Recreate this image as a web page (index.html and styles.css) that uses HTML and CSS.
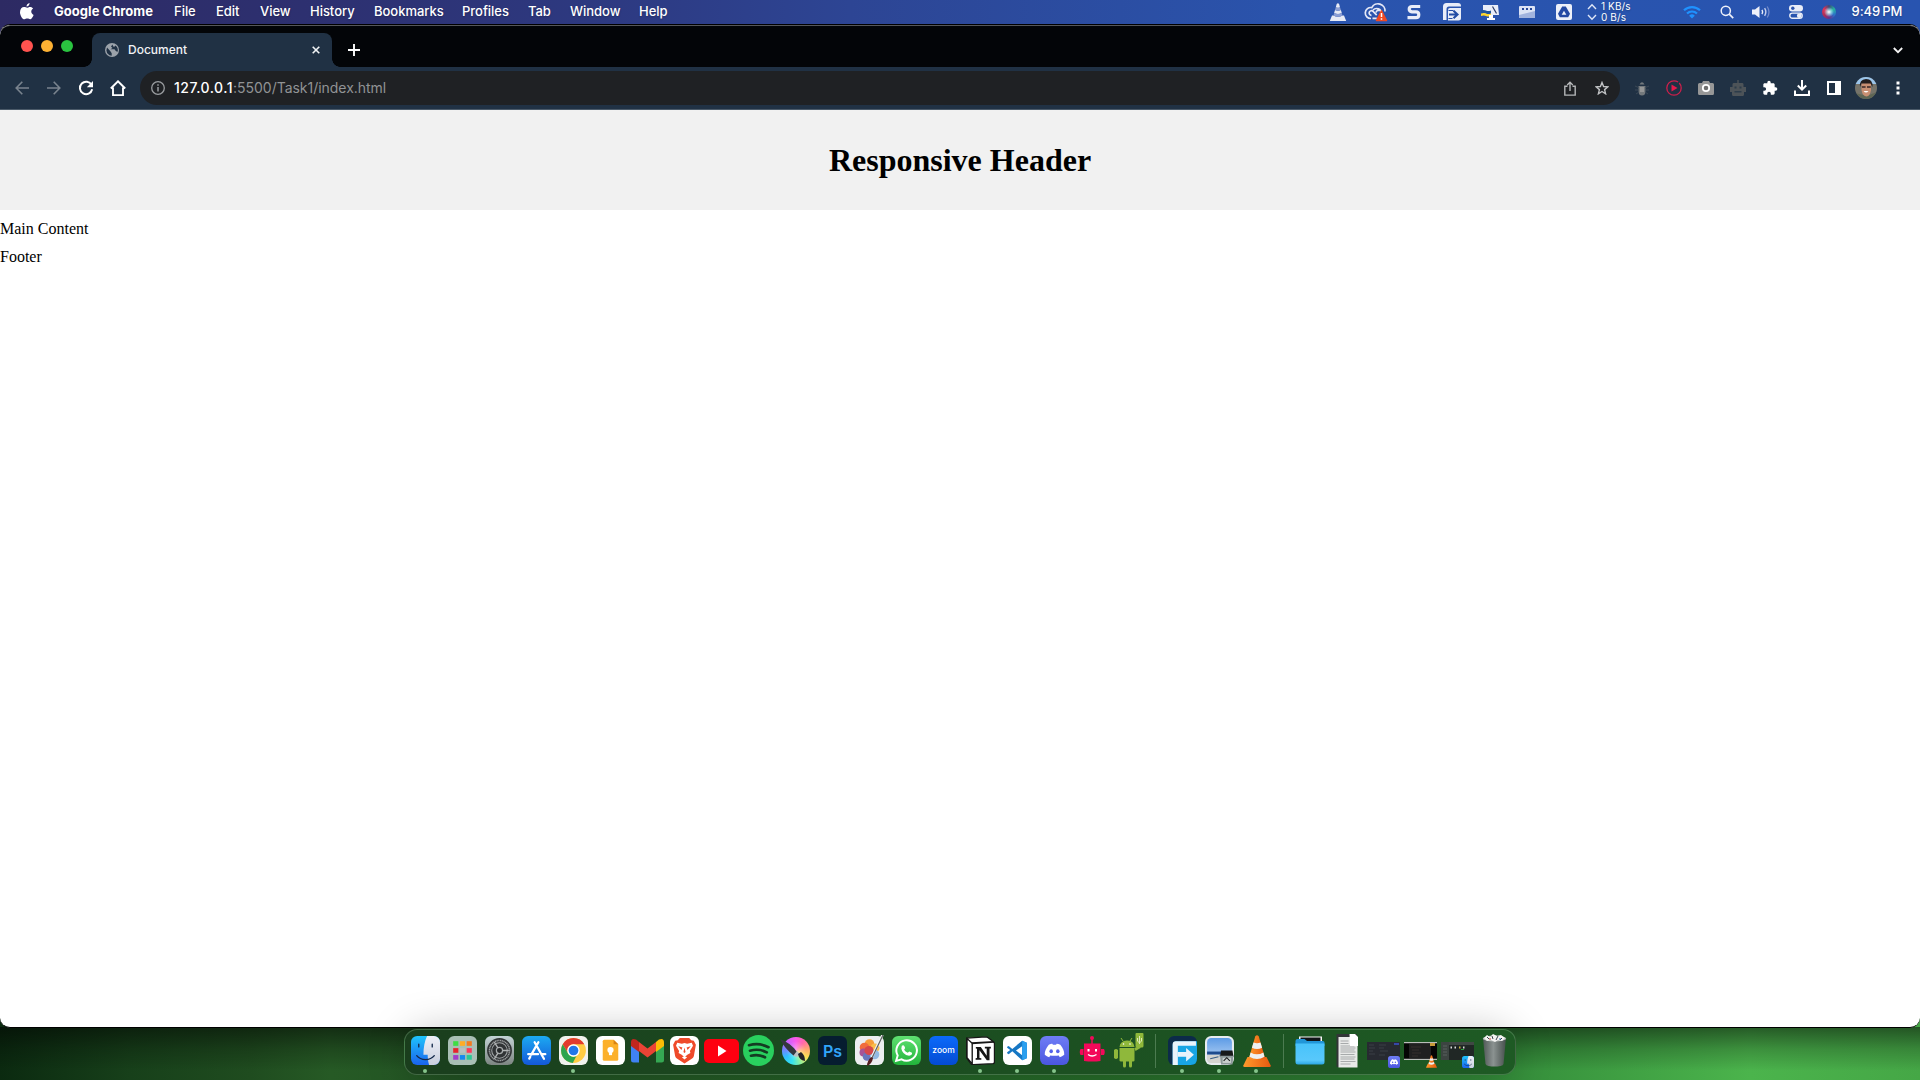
FILE: index.html
```html
<!DOCTYPE html>
<html lang="en">
<head>
<meta charset="utf-8">
<title>Document</title>
<link rel="stylesheet" href="styles.css">
</head>
<body>
<svg class="defs" aria-hidden="true">
  <defs>
    <linearGradient id="gBlue" x1="0" y1="0" x2="0" y2="1"><stop offset="0" stop-color="#1fc4fb"/><stop offset="1" stop-color="#1a63ee"/></linearGradient>
    <linearGradient id="gStore" x1="0" y1="0" x2="0" y2="1"><stop offset="0" stop-color="#1caaf2"/><stop offset="1" stop-color="#1458d8"/></linearGradient>
    <linearGradient id="gGrey" x1="0" y1="0" x2="0" y2="1"><stop offset="0" stop-color="#c3d3d5"/><stop offset="1" stop-color="#7c8581"/></linearGradient>
    <linearGradient id="gPale" x1="0" y1="0" x2="0" y2="1"><stop offset="0" stop-color="#eef0f8"/><stop offset="1" stop-color="#c8cedd"/></linearGradient>
    <linearGradient id="gGreen" x1="0" y1="0" x2="0" y2="1"><stop offset="0" stop-color="#5fe071"/><stop offset="1" stop-color="#22b43b"/></linearGradient>
    <linearGradient id="gDiscord" x1="0" y1="0" x2="0" y2="1"><stop offset="0" stop-color="#6f7df6"/><stop offset="1" stop-color="#4a56df"/></linearGradient>
    <linearGradient id="gTrash" x1="0" y1="0" x2="1" y2="0"><stop offset="0" stop-color="#55595c"/><stop offset=".45" stop-color="#94979a"/><stop offset="1" stop-color="#4a4e50"/></linearGradient>
    <linearGradient id="gCone" x1="0" y1="0" x2="1" y2="0"><stop offset="0" stop-color="#ff9a2c"/><stop offset="1" stop-color="#e85a10"/></linearGradient>
    <linearGradient id="gFolder" x1="0" y1="0" x2="0" y2="1"><stop offset="0" stop-color="#48c3fa"/><stop offset=".8" stop-color="#58c8fb"/><stop offset="1" stop-color="#2ba6e4"/></linearGradient>
    <linearGradient id="gSky" x1="0" y1="0" x2="0" y2="1"><stop offset="0" stop-color="#5d9be6"/><stop offset="1" stop-color="#c2dbf5"/></linearGradient>
  </defs>
  <symbol id="finder" viewBox="0 0 28 28">
    <rect width="28" height="28" rx="6" fill="url(#gBlue)"/>
    <path d="M15.500 0H22a6 6 0 0 1 6 6v16a6 6 0 0 1-6 6h-4.500c-.9-3-1.300-6-1.400-10H12c0-7 1.200-13 3.500-18z" fill="url(#gPale)"/>
    <path d="M7.500 8v2.500M20.500 8v2.500M5.500 19c4 5 13 5 17 0" fill="none" stroke="#13284a" stroke-width="1.300" stroke-linecap="round"/>
  </symbol>
  <symbol id="discord" viewBox="0 0 28 28">
    <rect width="28" height="28" rx="6" fill="url(#gDiscord)"/>
    <path d="M8.500 8.500c1.500-.8 2.600-1 3.400-1.100l.6 1.100h3l.6-1.100c1 .1 2.300.4 3.500 1.100 2.700 3.300 4 6.300 3.800 9.700-1.400 1.200-2.800 1.900-4.300 2.300l-1-1.700c-2.600.5-5.600.5-8.200 0l-1 1.700c-1.600-.4-3-1.100-4.300-2.300C4.300 14.800 6 11.600 8.500 8.500z" fill="#fff"/>
    <ellipse cx="10.800" cy="14.800" rx="1.700" ry="1.900" fill="#5563ea"/><ellipse cx="17.200" cy="14.800" rx="1.700" ry="1.900" fill="#5563ea"/>
  </symbol>
  <symbol id="cone" viewBox="0 0 28 32">
    <path d="M4.500 22h19l4.200 8.500q.3 1.500-1.200 1.500h-25Q0 32 .3 30.500z" fill="url(#gCone)"/>
    <path d="M12.200 1.500Q14-.8 15.800 1.500L22 23q-8 5.500-16 0z" fill="url(#gCone)"/>
    <path d="M10.500 7.500q3.500 1.600 7 0l1.600 5.300q-5.100 2.600-10.200 0zM7.600 17.500q6.400 3.700 12.800 0l1.100 4.300q-7.500 4.600-15 0z" fill="#eef0f1"/>
  </symbol>
</svg>

<div class="desktop">
  <div class="menubar">
    <svg class="apple" viewBox="0 0 14 17"><path d="M9.600 0c.1 1.700-1.400 3.600-3.100 3.600C6.300 2 7.900.2 9.600 0zM7.100 4.800C7.800 4.800 8.800 4 10.100 4c1.300 0 2.400.7 3 1.600-2.700 1.600-2.300 5.200.5 6.400-.7 1.900-2.100 4.300-3.500 4.300-1 0-1.500-.7-2.800-.7s-1.900.7-2.800.7C2.300 16.300 0 12.200 0 9.200 0 5.900 2 4.100 4 4.100c1.300 0 2.400.7 3.100.7z" fill="#fff"/></svg>
    <b>Google Chrome</b><span>File</span><span>Edit</span><span>View</span><span>History</span><span>Bookmarks</span><span>Profiles</span><span>Tab</span><span>Window</span><span>Help</span>
    <div class="status">
      <svg width="18" height="20" viewBox="0 0 18 20"><path d="M7.700 2q1.200-1.600 2.400 0l.9 3.200q-2 1-4.200 0zM6 8q3 1.500 5.900 0l.9 3q-3.800 2-7.700 0zM3 13.500h1.500q4.400 2.500 9 0H15l2.200 5.500H.8z" fill="#e8ebf5"/><path d="M6.800 5.200q2 1 4.200 0l.9 2.800q-3 1.500-5.900 0zM5.100 11q3.900 2 7.700 0l.7 2.500q-4.500 2.500-9 0z" fill="#8b9ed4"/></svg>
      <svg width="24" height="20" viewBox="0 0 24 20"><g fill="none" stroke="#e5e9f7" stroke-width="1.700"><path d="M7 16.500a5.500 5.500 0 1 1 .8-10.900A7 7 0 0 1 21 9.500M7.500 13.300a2.300 2.300 0 1 1 1.600-3.900l3.600 3.800M9 8a5 5 0 0 1 8.500 3.300M8.500 16.300h4.300M12 10.500a3 3 0 0 1 4-2"/></g><path d="M17.500 8.800 22.500 18.500h-10z" fill="#f04a24" stroke="#f04a24" stroke-width="1.500" stroke-linejoin="round"/><path d="M17.500 11v4M17.500 16.200v1.500" stroke="#fff" stroke-width="1.500"/></svg>
      <svg width="14" height="18" viewBox="0 0 14 18"><path d="M13.200 3.500H5Q2.200 3.500 2.200 6T5 8.800h4Q11.800 8.800 11.800 11.700T9 14.600H.5" fill="none" stroke="#e9edf8" stroke-width="3.200"/></svg>
      <svg width="20" height="20" viewBox="0 0 20 20"><path d="M1 18V4.500Q1 1 4.500 1H16q3 0 3 3v.5H7Q4.500 4.500 4.500 7v11z" fill="#e9edf8"/><path d="M6 18.500V8q0-2 2-2h11v10q0 2.500-2.500 2.500z" fill="#e9edf8"/><path d="M7 12.500h7.500M11.500 8.700l4 3.800-4 3.800" fill="none" stroke="#234ca4" stroke-width="2.100"/><path d="M6.500 8.500h5M6.500 16.500h4" stroke="#234ca4" stroke-width="1.200"/></svg>
      <svg width="20" height="18" viewBox="0 0 20 18"><path d="M3 2h15l1 10H3z" fill="#e9edf8"/><path d="M12.500 3.500l4 7" stroke="#2a3b68" stroke-width="1.200"/><path d="M1 7.500q3-1 5 0t5 0v3.200q-3 1-5 0t-5 0z" fill="#22569b"/><path d="M1 10.500q3-1 5 0t5 0V13q-3 1-5 0t-5 0z" fill="#ffd52b"/><path d="M9 12h4v3h2v2H7v-2h2z" fill="#fff"/></svg>
      <svg width="18" height="18" viewBox="0 0 18 18"><rect x="1" y="3" width="16" height="12" rx="1" fill="#dce3f5"/><path d="M1 12 17 8v6q0 1-1 1H2q-1 0-1-1z" fill="#a1b3de"/><path d="M4 5h2v2H4zM8 5h2v2H8zM12 5h2v2h-2z" fill="#27489a"/></svg>
      <svg width="18" height="18" viewBox="0 0 18 18"><rect x="1" y="1" width="16" height="16" rx="2" fill="#edf0f9"/><path d="M7.200 3.500h3.600l4.200 7.300-1.800 3.400H4.800L3 10.800z" fill="#2449a3"/><path d="M9 7.800l2.300 4H6.700z" fill="#edf0f9"/></svg>
      <div class="net"><svg viewBox="0 0 10 18" width="10" height="18"><path d="M1 6l4-4.200L9 6M1 12l4 4.200L9 12" fill="none" stroke="#dfe6f7" stroke-width="1.400"/></svg><div>1 KB/s<br>0 B/s</div></div>
      <svg width="18" height="14" viewBox="0 0 18 14"><g fill="none" stroke="#1f92ff" stroke-width="2.200"><path d="M1 5.300a11.500 11.500 0 0 1 16 0M4 8.500a7.200 7.200 0 0 1 10 0"/></g><path d="M6.200 10.700a4 4 0 0 1 5.600 0L9 13.500z" fill="#1f92ff"/></svg>
      <svg width="14" height="14" viewBox="0 0 14 14"><circle cx="5.800" cy="5.800" r="4.600" fill="none" stroke="#eef1fa" stroke-width="1.500"/><path d="m9.200 9.200 4 4" stroke="#eef1fa" stroke-width="1.700"/></svg>
      <svg width="20" height="14" viewBox="0 0 20 14"><path d="M1 4.500h3L8.500 1v12L4 9.500H1z" fill="#eef1fa"/><path d="M11 4.800q1.300 2.200 0 4.400" fill="none" stroke="#eef1fa" stroke-width="1.400"/><path d="M13.600 3.200q2.500 3.800 0 7.600" fill="none" stroke="#c4cfed" stroke-width="1.400"/><path d="M16.200 1.500q3.600 5.500 0 11" fill="none" stroke="#7088cb" stroke-width="1.300"/></svg>
      <svg width="14" height="14" viewBox="0 0 14 14"><rect y="0" width="14" height="6.400" rx="3.200" fill="#e9edf8"/><circle cx="3.800" cy="3.200" r="1.700" fill="#2c54ad"/><rect x=".8" y="8.100" width="12.400" height="5.200" rx="2.600" fill="none" stroke="#e9edf8" stroke-width="1.400"/><circle cx="10.200" cy="10.700" r="2.300" fill="#e9edf8"/></svg>
      <i class="siri"></i>
      <time>9:49<span>PM</span></time>
    </div>
  </div>

  <div class="window">
    <div class="tabstrip">
      <div class="lights"><i class="red"></i><i class="amber"></i><i class="green"></i></div>
      <div class="tab">
        <svg width="14" height="14" viewBox="0 0 14 14"><circle cx="7" cy="7" r="7" fill="#9ba2aa"/><path d="M2 4.500 5.200 8l1.500 2.300v2.500Q2 12 1.400 7.500zM7.500 1.500 6 3.500 7.500 5l-2 1.300h4l1.500 2 1.700.5q.8-4-2.200-6.300L9 4 8 3z" fill="#203144"/></svg>
        <span>Document</span>
        <svg width="8" height="8" viewBox="0 0 8 8"><path d="M.7.700l6.600 6.600M7.300.7.700 7.300" stroke="#f1f3f5" stroke-width="1.600"/></svg>
      </div>
      <svg class="plus" width="12" height="12" viewBox="0 0 12 12"><path d="M6 0v12M0 6h12" stroke="#fff" stroke-width="1.900"/></svg>
      <svg class="chevron" width="10" height="7" viewBox="0 0 10 7"><path d="m.8 1 4.200 4.200L9.200 1" fill="none" stroke="#f4f4f4" stroke-width="1.800"/></svg>
    </div>

    <div class="toolbar">
      <div class="slot"><svg width="14" height="14" viewBox="0 0 14 14"><path d="M14 7H1.500M7.300.8 1.200 7l6.100 6.200" fill="none" stroke="#79838e" stroke-width="1.600"/></svg></div>
      <div class="slot"><svg width="14" height="14" viewBox="0 0 14 14"><path d="M0 7h12.500M6.700.8 12.800 7l-6.100 6.200" fill="none" stroke="#79838e" stroke-width="1.600"/></svg></div>
      <div class="slot"><svg width="16" height="16" viewBox="0 0 16 16"><path d="M13.600 5A6.200 6.200 0 1 0 14.200 9.300" fill="none" stroke="#fff" stroke-width="2"/><path d="M15 1v6.200H8.800z" fill="#fff"/></svg></div>
      <div class="slot"><svg width="16" height="16" viewBox="0 0 16 16"><path d="M.8 8.500 8 1.300l7.200 7.200M3 7.500v7.600h10V7.500" fill="none" stroke="#fff" stroke-width="1.900"/></svg></div>
      <div class="omnibox">
        <svg width="14" height="14" viewBox="0 0 14 14"><circle cx="7" cy="7" r="6.300" fill="none" stroke="#9a9da0" stroke-width="1.300"/><path d="M7 6v4.500M7 3.300v1.500" stroke="#9a9da0" stroke-width="1.500"/></svg>
        <div class="url"><b>127.0.0.1</b>:5500/Task1/index.html</div>
        <svg class="share" width="12" height="15" viewBox="0 0 12 15"><path d="M3.500 5.200H.8v8.900h10.400V5.200H8.500M6 10V1.500M3.200 4 6 1.200 8.800 4" fill="none" stroke="#b4b6b8" stroke-width="1.400"/></svg>
        <svg width="14" height="14" viewBox="0 0 14 14"><path d="m7 1.500 1.600 4 4.300.3-3.300 2.800 1 4.200L7 10.500l-3.600 2.300 1-4.200L1.100 5.800l4.300-.3z" fill="none" stroke="#c0c2c4" stroke-width="1.400"/></svg>
      </div>
      <div class="slot"><svg width="14" height="15" viewBox="0 0 14 15"><path d="M4.500 3.500Q7-1 9.500 3.500z" fill="#73797d"/><path d="M3.500 5h7v5q0 4.500-3.500 4.500T3.500 10z" fill="#74797c"/><path d="M5 6h4v5H5z" fill="#969797"/><path d="M0 5l3.500 1.500M14 5l-3.500 1.500M0 9h3.500M10.500 9H14M1 13l3-2M13 13l-3-2" stroke="#3b4856"/></svg></div>
      <div class="slot"><svg width="16" height="16" viewBox="0 0 16 16"><circle cx="8" cy="8" r="7.200" fill="none" stroke="#cd1f4b" stroke-width="1.300" stroke-dasharray="38 1.500"/><path d="M5.500 4.500v7l6-3.500z" fill="#e51a4b"/></svg></div>
      <div class="slot"><svg width="16" height="14" viewBox="0 0 16 14"><path d="M1.500 2H4l1-2h6l1 2h2.500Q16 2 16 3.500v9q0 1.500-1.500 1.500h-13Q0 14 0 12.500v-9Q0 2 1.500 2z" fill="#979797"/><circle cx="8" cy="7" r="3.200" fill="#6f6f6f" stroke="#fff" stroke-width="1.800"/></svg></div>
      <div class="slot"><svg width="16" height="16" viewBox="0 0 16 16"><path d="M7.300 0h1.400v3h3.800q1 0 1 1.500V7H16v5h-2v2.500q0 1.500-1.500 1.500h-9Q2 16 2 14.500V12H0V7h2.500V4.500q0-1.500 1-1.500h3.800z" fill="#4d5358"/><path d="M4.500 6.500h2v2h-2zM9.500 6.500h2v2h-2zM4.500 11h7v1.500h-7z" fill="#2d3c4a"/></svg></div>
      <div class="slot"><svg width="16" height="16" viewBox="0 0 24 24"><path d="M20.500 11H19V7c0-1.100-.9-2-2-2h-4V3.500a2.500 2.500 0 0 0-5 0V5H4c-1.100 0-2 .9-2 2v3.800h1.500a2.700 2.700 0 0 1 0 5.400H2V20c0 1.100.9 2 2 2h3.800v-1.500a2.700 2.700 0 0 1 5.400 0V22H17c1.100 0 2-.9 2-2v-4h1.500a2.500 2.500 0 0 0 0-5z" fill="#fff"/></svg></div>
      <div class="slot"><svg width="16" height="16" viewBox="0 0 16 16"><path d="M8 0v9M3.800 5.500 8 9.700l4.200-4.200M1 10.500V15h14v-4.500" fill="none" stroke="#fff" stroke-width="2"/></svg></div>
      <div class="slot"><svg width="14" height="14" viewBox="0 0 14 14"><path d="M0 0h14v14H0zM2 2v10h6V2z" fill="#fff" fill-rule="evenodd"/></svg></div>
      <div class="slot"><svg width="22" height="22" viewBox="0 0 22 22"><clipPath id="av"><circle cx="11" cy="11" r="11"/></clipPath><g clip-path="url(#av)"><path d="M0 0h22v22H0z" fill="#75736a"/><path d="M0 0h22v7H0z" fill="#9ac4ea"/><path d="M0 16l8 2 6 0 8-3v7H0z" fill="#5f6654"/><path d="M6.500 6h9.500v7q-1 6-4.500 6.500-4-.5-5-6.500z" fill="#c98f72"/><path d="M5 10Q4 2.500 11 2q7 0 6.500 8l-2-3.500h-9z" fill="#251f1f"/><path d="M6.800 9.300h3.800v1.400H7zM12 9.300h3.800v1.400H12z" fill="#3a2927"/><path d="M8.500 14h5q-2.500 3-5 0z" fill="#fff"/></g></svg></div>
      <div class="slot"><svg width="4" height="14" viewBox="0 0 4 14"><path d="M.5.500h3v3h-3zM.5 5.500h3v3h-3zM.5 10.500h3v3h-3z" fill="#fff"/></svg></div>
    </div>

    <div class="page">
      <header><h1>Responsive Header</h1></header>
      <main>Main Content</main>
      <footer>Footer</footer>
    </div>
  </div>

  <div class="dockarea">
    <div class="dock">
      <div class="app on"><svg width="29" height="29"><use href="#finder"/></svg></div>
      <div class="app"><svg width="29" height="29" viewBox="0 0 28 28"><rect width="28" height="28" rx="6" fill="#a9bfb5"/><path d="M5 5h5v4.500H5z" fill="#3fdc45"/><path d="M11.500 5h5v4.500h-5z" fill="#ffac26"/><path d="M18 5h5v4.500h-5z" fill="#f47b1f"/><path d="M5 11.700h5v4.500H5z" fill="#e8232d"/><path d="M11.500 11.700h5v4.500h-5z" fill="#b8bfc1"/><path d="M18 11.700h5v4.500h-5z" fill="#ff3859"/><path d="M5 18.400h5v4.500H5z" fill="#a13dc9"/><path d="M11.500 18.400h5v4.500h-5z" fill="#1689ef"/><path d="M18 18.400h5v4.500h-5z" fill="#2bc994"/></svg></div>
      <div class="app"><svg width="29" height="29" viewBox="0 0 28 28"><rect width="28" height="28" rx="6" fill="url(#gGrey)"/><circle cx="14" cy="14" r="12" fill="#303335"/><circle cx="14" cy="14" r="9.700" fill="none" stroke="#999d9e" stroke-width="1.500" stroke-dasharray="1.200 .5"/><circle cx="14" cy="14" r="7.500" fill="none" stroke="#a2a6a7" stroke-width="1"/><circle cx="14" cy="14" r="3" fill="#25282a" stroke="#a6aaab" stroke-width="1.200"/><path d="M17 14h6M12.500 11.500 9 6M12.500 16.500 9 22" stroke="#b0b3b4" stroke-width="1.300"/></svg></div>
      <div class="app"><svg width="29" height="29" viewBox="0 0 28 28"><rect width="28" height="28" rx="6" fill="url(#gStore)"/><path d="M12.200 6l7.600 13.500M15.800 6 9 18M6 17.500h9.500M19 17.500h3.500M8 20l-1 1.800M20.200 20.300l1 1.700" stroke="#fff" stroke-width="2.200" stroke-linecap="round"/></svg></div>
      <div class="app on"><svg width="29" height="29" viewBox="0 0 28 28"><rect width="28" height="28" rx="6" fill="#f1f2ee"/><circle cx="14" cy="14" r="12" fill="#fc4"/><path d="M3.600 8A12 12 0 0 1 24.400 8H14a6 6 0 0 0-5.500 8.400z" fill="#e23b2e"/><path d="M3.600 8 8.800 17a6 6 0 0 0 8 2.400l-3.500 6.600A12 12 0 0 1 3.600 8z" fill="#2da44e"/><circle cx="14" cy="14" r="6" fill="#fff"/><circle cx="14" cy="14" r="4.700" fill="#2277e8"/></svg></div>
      <div class="app"><svg width="29" height="29" viewBox="0 0 28 28"><rect width="28" height="28" rx="6" fill="#fff"/><path d="M8 3.500h9L21.500 8v14.500q0 1.500-1.500 1.500H8q-1.500 0-1.500-1.500V5Q6.500 3.500 8 3.500z" fill="#fcb02b"/><path d="M17 3.500 21.500 8H17z" fill="#d98214"/><circle cx="14" cy="13.500" r="3" fill="#fff"/><path d="M12.500 16h3v2.500h-3z" fill="#fff"/></svg></div>
      <div class="app"><svg width="33" height="25" viewBox="0 0 33 25"><path d="M0 3.500V22q0 2.500 2.500 2.500H8V8z" fill="#3f82f3"/><path d="M33 3.500V22q0 2.500-2.500 2.500H25V8z" fill="#35a853"/><path d="M25 4 28 1.500q5-2 5 3V8l-8 6z" fill="#fbbc05"/><path d="M0 4.500q0-5 5-3L8 4v10L0 8z" fill="#c0261e"/><path d="M8 4l8.500 6.500L25 4v9l-8.500 6.500L8 13z" fill="#ea4335"/></svg></div>
      <div class="app"><svg width="29" height="29" viewBox="0 0 28 28"><rect width="28" height="28" rx="6" fill="#fff"/><path d="M9.500 2h9l2 2 2.500.5 2 4-2 11q-.5 1.500-2 2.500L14 26.500 7 22q-1.500-1-2-2.500L3 8.500l2-4L7.500 4z" fill="#ef4a2a"/><path d="M7 6.500l4.500 1L14 6.700l2.500.8 4.500-1 1.200 3-3 5 .5 2-3 1.500-2.700 2.500-2.700-2.500-3-1.500.5-2-3-5z" fill="#fff"/><path d="M8 10l4 1-1 2.500zM20 10l-4 1 1 2.500zM14 11l1 4.500-1 1-1-1z" fill="#ef4a2a"/><path d="M11.500 20.500 14 19.500l2.500 1L14 22.700z" fill="#fff"/></svg></div>
      <div class="app"><svg width="35" height="24" viewBox="0 0 35 24"><rect width="35" height="24" rx="5" fill="#fe0010"/><path d="M14 6.500v11l8.500-5.500z" fill="#fff"/></svg></div>
      <div class="app"><svg width="31" height="31" viewBox="0 0 31 31"><circle cx="15.500" cy="15.500" r="15.500" fill="#29d05e"/><path d="M6 10.200q10.500-2.800 19.500 2M7 15.700q9-2.500 16.800 1.700M8 20.700q7.500-1.900 14 1.600" fill="none" stroke="#143c22" stroke-linecap="round" stroke-width="2.700"/></svg></div>
      <div class="app"><div class="krita"><svg width="29" height="29" viewBox="0 0 29 29"><path d="M0 2q11 4 17 13l-3 4Q5 12 0 2z" fill="#343740"/><path d="m17 14 3 3-3 3-4-1z" fill="#bbc0c1"/><path d="m18 17 3-2q4 3 4 9-6-1-7-7z" fill="#252228"/></svg></div></div>
      <div class="app"><div class="tile ps">Ps</div></div>
      <div class="app"><svg width="29" height="31" viewBox="0 0 29 31"><rect y="1" width="29" height="29" rx="6" fill="#eceef0"/><g opacity=".92"><circle cx="14.500" cy="9" r="4.800" fill="#f9972a"/><circle cx="9.500" cy="12.500" r="4.800" fill="#f2632f"/><circle cx="20" cy="13" r="4.500" fill="#fbb83c"/><circle cx="8.500" cy="17.500" r="4" fill="#a2478f"/><circle cx="12" cy="21.500" r="4.300" fill="#5e6cb8"/><circle cx="19.500" cy="19.500" r="4.800" fill="#8bb6e2"/><circle cx="14" cy="15.500" r="4.500" fill="#d63a3c"/></g><path d="M27.500 0 16 24" stroke="#f5f5f5" stroke-width="2.500"/><path d="M28 0 16.500 24" stroke="#5d5f62" stroke-width="1.200"/><path d="m16 22 2 1q-1 6-6 8 0-5 4-9z" fill="#531e20"/></svg></div>
      <div class="app"><svg width="29" height="29" viewBox="0 0 28 28"><rect width="28" height="28" rx="6" fill="url(#gGreen)"/><path d="m4 24 1.500-5.200A9.900 9.900 0 1 1 9.300 22.600z" fill="none" stroke="#fff" stroke-width="1.900"/><path d="M9.500 9.500q1.500-1.500 2.500.5l.7 1.700-1 1.500q1 2 3.500 3l1.500-1.300 2.600 1.200q.5 2.400-2.800 2.900Q10 18 9 12z" fill="#fff"/></svg></div>
      <div class="app"><div class="tile zoom">zoom</div></div>
      <div class="app on"><svg width="29" height="29" viewBox="0 0 28 28"><path d="M1 2 19 .8Q20 .8 21 1.500l5.500 4q1 .7 1 2V25q0 1.500-1.500 1.700L7 27.700q-1.500 0-2.300-1L1 21.500Q.5 21 .5 20V3z" fill="#fff" stroke="#171717" stroke-width="1.300"/><path d="M1 2.500 6 7v20l-5-6z" fill="#fff" stroke="#171717" stroke-width="1.300"/><path d="M5.500 7 27 5.700" stroke="#171717" stroke-width="1.800"/><path d="M9.500 10.500h4.800L20 19v-7h-1.800v-1.700h5.800V12h-1.300v11.500h-2.600L13 13.700v7.500l1.800.3V23H9.300v-1.500l1.300-.3v-9l-1.100-.2z" fill="#151515"/></svg></div>
      <div class="app on"><svg width="29" height="29" viewBox="0 0 28 28"><rect width="28" height="28" rx="6" fill="#fff"/><path d="m18.500 4.500 4.500 2v15l-4.500 2L9 14.700l-3.500 2.800L4 16.600v-1l3-2-3-2.200v-1l1.500-.8L9 12.500zM18.500 10 12.500 14l6 4.500z" fill="#1677c4" fill-rule="evenodd"/><path d="m18.500 4.500 4.500 2v15l-4.500 2z" fill="#2a9ff0"/></svg></div>
      <div class="app on"><svg width="29" height="29"><use href="#discord"/></svg></div>
      <div class="app"><svg class="up2" width="26" height="26" viewBox="0 0 26 26"><circle cx="13" cy="2" r="2" fill="#f3095a"/><path d="M12.300 2h1.400v6h-1.400zM5 7.500h16.500v17.500q-8 1-16.500 0zM1.500 13h3v6h-3q-1.500-3 0-6zM22 13h3q1.500 3 0 6h-3z" fill="#f3095a"/><path d="M8.500 13h2v2.500h-2zM16 13h2v2.500h-2z" fill="#fff"/><path d="M9 18.500q4 3 8.500 0" fill="none" stroke="#fff" stroke-width="1.400"/></svg></div>
      <div class="app"><svg width="30" height="35" viewBox="0 0 30 35"><g fill="#8fb83b"><path d="M5.500 14q.5-6 7.300-6.500T20.500 14zM5.500 15h15v12.500q0 1-1.500 1H18V33q0 1.500-1.500 1.500T15 33v-4.500h-3V33q0 1.500-1.500 1.500T9 33v-4.500H7q-1.500 0-1.500-1z"/><path d="M0 17q2-2 4 0v8q-2 2-4 0zM20.500 15l4-2V9h2v6l-5 3zM21.500 1q0-1 1-1h6q1 0 1 1v12q0 1.500-1.500 1.500H23q-1.500 0-1.500-1.500z"/></g><path d="m7 5 2 3M18 5l-2 3" stroke="#8fb83b"/><circle cx="9.500" cy="11" r=".8" fill="#fff"/><circle cx="16" cy="11" r=".8" fill="#fff"/><path d="M25.500 3v8M23.500 5v3l2 2 2-2V5" fill="none" stroke="#dceaba"/></svg></div>
      <i class="divider"></i>
      <div class="app on"><svg width="29" height="29" viewBox="0 0 28 28"><rect width="28" height="28" rx="6" fill="#0c2b49"/><path d="M4.500 28V9q0-4 4-4H28v17q0 6-6 6z" fill="#18a5e4"/><path d="M4.500 28V8q0-3 3-3H27v4.500H9.500V28z" fill="#e9f3fb"/><path d="M9.500 15.500h8v-4l7.500 6.500-7.500 6.500v-4.500h-8z" fill="#e9f3fb"/></svg></div>
      <div class="app on"><svg width="29" height="29" viewBox="0 0 28 28"><rect width="28" height="28" rx="6" fill="#e7ecef"/><rect x="2" y="2" width="24" height="24" rx="4" fill="url(#gSky)"/><path d="M2 15h24v3H2z" fill="#1f4c8d"/><path d="M2 18h24v4q0 4-4 4H6q-4 0-4-4z" fill="#d4d4cf"/><path d="M5 22l8-2M14 19l3 1" stroke="#385d84"/><path d="M15.500 14h11l1 6H14.500z" fill="#17191a"/><path d="M14.500 19h13l-1 8.500h-11z" fill="#8d999a"/><path d="M17 21h8v5h-8z" fill="#cad0ce"/><path d="M18 24l3-3 3 3" stroke="#17191a" fill="none"/></svg></div>
      <div class="app on"><svg width="28" height="32"><use href="#cone"/></svg></div>
      <i class="divider last"></i>
      <div class="app"><svg width="30" height="29" viewBox="0 0 30 29"><path d="M4 .5h23V6H4z" fill="#f6f6f6"/><path d="M5.500 1.500h20V5h-20z" fill="#101417"/><path d="M.5 5q0-2 2-2h7l2.500 2h16q1.500 0 1.500 1.500V10H.5z" fill="#2196d8"/><path d="M.5 7.500h29V26q0 2.500-2.500 2.500H3Q.5 28.500.5 26z" fill="url(#gFolder)"/></svg></div>
      <div class="app"><svg width="22" height="34" viewBox="0 0 22 34"><path d="M.5 0H21v33H.5z" fill="#323537"/><path d="M2.500 3H21.500v30.500H2.500z" fill="#e8e9e8"/><path d="M4.500 7h8M4.500 9.500h8M4.500 12h14M4.500 14h15M4.500 16h14M4.500 18h15M4.500 20.500h14M4.500 23h15M4.500 25h14M4.500 27.500h15M4.500 30h10" stroke="#a7aaab"/><path d="M13.500 0H19l3 3v9h-8z" fill="#fff"/></svg></div>
      <div class="app"><div class="thumb slate"><svg viewBox="0 0 33 18" width="33" height="18"><path d="M2 3h5M2 6h6M2 9h4M2 12h6M12 3h7M12 6h5M13 9h8M12 13h6" stroke="#3a3e46"/><path d="M27 2h5" stroke="#3548a8" stroke-width="2"/></svg><svg class="badge" width="12" height="12"><use href="#discord"/></svg></div></div>
      <div class="app"><div class="thumb black"><svg viewBox="0 0 33 18" width="33" height="18"><path d="M5 2h22v14H5z" fill="#202020"/><path d="M0 .7h33M0 17.300h33" stroke="#b9bdb9" stroke-width="1.200"/><path d="M7 5h10M8 8h7M8 11h9M8 14h6" stroke="#352f2d"/><path d="M26 1h5v3h-5z" fill="#c79a39"/></svg><svg class="badge" width="11" height="13"><use href="#cone"/></svg></div></div>
      <div class="app"><div class="thumb coal"><svg viewBox="0 0 33 18" width="33" height="18"><path d="M0 0h8v18H0z" fill="#3c4441"/><path d="M8 0h25v3H8z" fill="#404844"/><path d="M2 4h4M2 7h4M2 10h4M2 13h4" stroke="#59605e"/><path d="M9.500 4.500H11V6.500H9.500zM13.500 4.500H15v2h-1.500zM22 4.500h1.500v2H22z" fill="#d6d9d8"/><path d="M18 4.500h1.500v2H18z" fill="#c7b23c"/><path d="M20 7.500h3" stroke="#29a03c"/></svg><svg class="badge" width="12" height="12"><use href="#finder"/></svg></div></div>
      <div class="app"><svg width="25" height="33" viewBox="0 0 25 33"><path d="M1 4h23l-2.500 26q-.3 1.500-3 2-6 1-12 0-2.500-.5-3-2z" fill="url(#gTrash)" opacity=".92"/><ellipse cx="12.500" cy="4.500" rx="11.700" ry="3" fill="#b9bebc"/><path d="M2 4l3-3 3 2 3-3 4 2 4-1 4 3-3 3-4-1-3 2-4-2-4 1z" fill="#f4f4f2"/><path d="M5 3l2 2M10 2l1 3M16 2l-2 4M20 4l-2 2" stroke="#394149"/><path d="M7 5h2" stroke="#be3d3a"/><path d="M17 5h2" stroke="#2d79b1"/></svg></div>
    </div>
  </div>
</div>
</body>
</html>
```

FILE: styles.css
```css
* { box-sizing: border-box; }

body {
  margin: 0;
  overflow: hidden;
  font-family: Inter, "Liberation Sans", sans-serif;
}

svg { display: block; flex: none; }
.defs { position: absolute; width: 0; height: 0; }

.desktop {
  width: 1920px;
  height: 1080px;
  display: flex;
  flex-direction: column;
  background:
    linear-gradient(90deg, #2d2a63 0, #2d3172 350px, #2d3a82 620px, #2d4594 850px, #2a54ad 1300px, #2854b0 1920px) 0 0 / 100% 40px no-repeat,
    linear-gradient(180deg, rgba(0, 0, 0, .5) 0, rgba(0, 0, 0, .2) 22px, rgba(0, 0, 0, 0) 44px) 0 1027px / 100% 53px no-repeat,
    linear-gradient(90deg, #0b2a10 0, #17401a 130px, #1f4c1f 250px, #265a25 330px, #225324 500px, #28702b 1100px, #348c3a 1500px, #4bb44c 1750px, #45a746 1920px);
}

/* Menu bar */
.menubar {
  height: 24px;
  display: grid;
  grid-template-columns: 34px 120px 42px 44px 50px 64px 88px 66px 42px 69px 60px 1fr;
  align-items: center;
  padding-left: 20px;
  color: #fff;
  font-size: 13px;
  font-weight: 500;
  line-height: 22px;
  white-space: nowrap;
  letter-spacing: -.03px;
  text-shadow: 0 1px 2px rgba(0, 0, 0, .25);
}
.menubar > b, .menubar > span { margin-top: -2px; }
.menubar b { font-weight: 700; letter-spacing: .04px; }
.apple { width: 14px; height: 17px; margin-top: -1px; }

.status {
  display: grid;
  grid-template-columns: 37px 39px 38px 38px 38px 36px 38px 91px 36px 33px 36px 34px 32px 64px;
  align-items: center;
  justify-content: end;
  justify-items: center;
  padding-right: 11px;
}
.net {
  display: flex;
  gap: 4px;
  align-items: center;
  justify-self: start;
  padding-left: 4px;
  font-size: 10px;
  line-height: 11px;
  font-weight: 400;
  letter-spacing: .1px;
}
.siri {
  width: 14px;
  height: 14px;
  border-radius: 50%;
  background:
    radial-gradient(circle at 50% 50%, #fff 0, rgba(180, 235, 245, .7) 22%, rgba(0, 0, 0, 0) 50%),
    conic-gradient(#3a4b7a, #25b3a0, #2b72c9, #6a2f88, #b02f57, #e0355a, #3a4b7a);
}
time { font-size: 13px; margin-top: -2px; }
time span { margin-left: 2px; }

/* Browser window */
.window {
  height: 1004px;
  display: flex;
  flex-direction: column;
  overflow: hidden;
  border-radius: 10px;
  background: #fff;
  border-bottom: 1px solid #000;
  border-top: 1px solid #000;
}
.tabstrip {
  height: 42px;
  display: flex;
  align-items: flex-end;
  padding-right: 17px;
  background: #030508;
  border-top: 1px solid #55575a;
  border-radius: 10px 10px 0 0;
}
.lights { display: flex; gap: 8px; width: 92px; padding: 0 0 15px 21px; }
.lights i { width: 12px; height: 12px; border-radius: 50%; }
.red { background: #ff534f; }
.amber { background: #fdb133; }
.green { background: #2ac440; }
.tab {
  position: relative;
  display: flex;
  align-items: center;
  width: 240px;
  height: 34px;
  padding: 0 12px 0 13px;
  border-radius: 8px 8px 0 0;
  background: #203144;
  color: #f1f3f5;
  font-size: 12px;
}
.tab span { flex: 1; padding: 0 0 2px 9px; font-weight: 450; }
.tab::before, .tab::after {
  content: "";
  position: absolute;
  bottom: 0;
  width: 8px;
  height: 8px;
}
.tab::before { left: -8px; background: radial-gradient(circle at 0 0, #030508 7.5px, #203144 8px); }
.tab::after { right: -8px; background: radial-gradient(circle at 100% 0, #030508 7.5px, #203144 8px); }
.plus { margin: 0 auto 11px 16px; }
.chevron { margin-bottom: 13px; }

.toolbar {
  height: 43px;
  display: flex;
  align-items: center;
  padding-left: 6px;
  background: #203144;
  border-bottom: 1px solid #4b5a69;
}
.slot { width: 32px; display: flex; justify-content: center; }
.slot:nth-child(4) { margin-right: 6px; }
.omnibox {
  width: 1480px;
  height: 34px;
  display: flex;
  align-items: center;
  margin-right: 6px;
  padding: 0 11px;
  border-radius: 17px;
  background: #1f2124;
}
.url {
  flex: 1;
  padding: 0 0 1px 9px;
  color: #919395;
  font-size: 14px;
  letter-spacing: -.03px;
}
.url b { color: #fff; font-weight: 500; letter-spacing: .5px; }
.share { margin-right: 19px; }

/* Page in the browser */
.page { flex: 1; font-family: "Liberation Serif", serif; font-size: 16px; color: #000; }
.page header { height: 100px; display: grid; place-items: center; background: #f1f1f1; }
.page h1 { margin: 0; font-size: 32px; line-height: 37px; }
.page main, .page footer { line-height: 18px; padding: 5px 0; }
.page main { padding-top: 10px; }

/* Dock */
.dockarea {
  position: relative;
  z-index: 1;
  flex: 1;
  display: flex;
  justify-content: center;
  align-items: flex-start;
  padding-top: 1px;
}
.dock {
  position: relative;
  display: flex;
  align-items: center;
  height: 46px;
  padding: 0 2px 3px;
  border: 1px solid rgba(160, 200, 160, .3);
  border-radius: 13px;
  background: linear-gradient(90deg, #1a3e1d, #1b4b20 40%, #1e5a24);
}
/* soft shade the dock casts on the window above it */
.dock::before {
  content: "";
  position: absolute;
  inset: 0 6px;
  border-radius: 13px;
  z-index: -1;
  box-shadow: 0 4px 44px rgba(0, 0, 0, .28);
}
.app { position: relative; width: 37px; height: 35px; display: grid; place-items: center; }
.app.on::after {
  content: "";
  position: absolute;
  left: 16px;
  bottom: -5px;
  width: 4px;
  height: 4px;
  border-radius: 50%;
  background: #85c48b;
}
.up2 { margin-top: -4px; }
.divider { width: 1px; height: 34px; margin: 0 8px; background: #4c7b50; }
.divider.last { margin-right: 7px; }
.tile { width: 29px; height: 29px; border-radius: 6px; display: grid; place-items: center; }
.ps { background: #061d30; color: #31a5fa; font-size: 16px; font-weight: 600; }
.zoom { background: linear-gradient(#0b6afb, #044bd2); color: #fff; font-size: 8.5px; font-weight: 500; padding-bottom: 1px; }
.krita {
  width: 28px;
  height: 28px;
  border-radius: 50%;
  background:
    radial-gradient(circle, rgba(255, 255, 255, .45), rgba(255, 255, 255, 0) 50%),
    conic-gradient(#fa59e9, #ff69a9, #ffa570, #ffe055, #8cf0a0, #35e4ef, #2fbfff, #7a80ff, #d060ff, #fa59e9);
}
.krita svg { margin-left: -2px; }
.thumb { position: relative; width: 33px; height: 18px; }
.slate { background: #272a31; }
.black { background: #050505; }
.coal { background: #202725; }
.badge { position: absolute; right: 0; bottom: -8px; }
```
